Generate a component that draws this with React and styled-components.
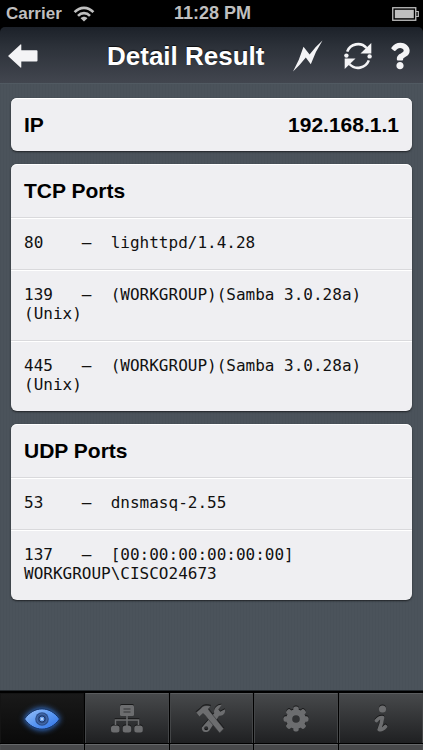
import React from 'react'
import styled, { createGlobalStyle, css } from 'styled-components'
import { FaQuestion } from 'react-icons/fa'

const GlobalStyle = createGlobalStyle`
  * { box-sizing: border-box; }
  body {
    margin: 0;
    background: #4a525a;
    font-family: "Liberation Sans", Arial, sans-serif;
  }
`

const Page = styled.div`
  min-height: 100vh;
  display: flex;
  flex-direction: column;
  background: #000;
`

const StatusBar = styled.div`
  display: grid;
  grid-template-columns: 1fr auto 1fr;
  align-items: center;
  height: 27px;
  padding: 0 4px 0 6px;
  color: #bfbfbf;
  font-size: 18px;
  font-weight: bold;
`

const Carrier = styled.div`
  display: flex;
  align-items: center;
  gap: 11px;
  font-size: 17px;
`

const Battery = styled.svg`
  justify-self: end;
`

const NavBar = styled.header`
  display: flex;
  align-items: center;
  height: 57px;
  padding: 2px 13px 0 8px;
  border-bottom: 1px solid #515a62;
  border-radius: 5px 5px 0 0;
  background: linear-gradient(#1c2129, #2c3139 35%, #42464f);
`

const NavTitle = styled.h1`
  flex: 1;
  margin: 0;
  padding-left: 69px;
  color: #fff;
  font-size: 26px;
  line-height: 30px;
  white-space: nowrap;
  text-shadow: 0 -1px 1px rgba(0, 0, 0, 0.7);
`

const NavButton = styled.button`
  display: flex;
  padding: 0;
  border: 0;
  background: none;
  color: #f4f4f6;
  cursor: pointer;
`

const NavActions = styled.div`
  display: flex;
  align-items: center;
  gap: 18px;
`

const HelpIcon = styled(FaQuestion)`
  width: 20px;
  height: 28px;
`

const Content = styled.main`
  flex: 1;
  display: flex;
  flex-direction: column;
  gap: 13px;
  padding: 14px 11px;
  background: repeating-linear-gradient(90deg, #495159 0 1px, #4b535b 1px 3px);
`

const Card = styled.section`
  border-radius: 6px;
  background: #efeff2;
  box-shadow: 0 1px 2px rgba(0, 0, 0, 0.6), inset 0 1px 0 #fff;
  overflow: hidden;
`

const CardHeader = styled.div`
  display: flex;
  align-items: center;
  justify-content: space-between;
  height: 53px;
  padding: 0 13px;
  color: #000;
  font-size: 21px;
  font-weight: bold;
`

const CardTitle = styled.h2`
  margin: 0;
  font-size: 21px;
`

const PortList = styled.ul`
  margin: 0;
  padding: 0;
  list-style: none;
`

const Port = styled.li`
  padding: 15px 13px 17px;
  border-top: 1px solid #d9d9dc;
  box-shadow: inset 0 1px 0 #fff;
  color: #111;
  font-family: "DejaVu Sans Mono", monospace;
  font-size: 16px;
  line-height: 19px;
  white-space: pre-wrap;
`

const TabBar = styled.nav`
  display: grid;
  grid-template-columns: repeat(5, 1fr);
  gap: 1px;
  padding-top: 2px;
  border-top: 1px solid #23282c;
  background: #000;
`

const raised = css`
  border: 1px solid #55585b;
  border-width: 1px 1px 0 1px;
`

const Tab = styled.button`
  display: flex;
  align-items: center;
  justify-content: center;
  height: 50px;
  padding: 0;
  ${raised}
  border-color: ${props => props.$active ? '#141414' : '#5a5c5e #434547'};
  background: ${props => props.$active
    ? 'linear-gradient(#191919, #0a0a0a)'
    : 'linear-gradient(#47494b, #1f2022)'};
  color: #6c6d6f;
  cursor: pointer;
`

const TabEdge = styled.div`
  height: 6px;
  ${raised}
  border-color: #66686a #4c4e50;
  background: #48494b;
`

const TabIcon = styled.svg`
  overflow: visible;
  filter: ${props => props.$glow
    ? 'drop-shadow(0 0 3px #3f8cff)'
    : 'drop-shadow(0 -1px 0 rgba(0, 0, 0, 0.6))'};
`

const WifiIcon = () => (
  <svg width="22" height="16" viewBox="0 0 22 16" fill="none" stroke="#bfbfbf" strokeWidth="2.6">
    <path d="M1.6 6.2C7 .4 15 .4 20.4 6.2" />
    <path d="M5 9.8C8.4 6.2 13.6 6.2 17 9.8" />
    <path d="M11 15.5L7.6 12.3C9.5 10.3 12.5 10.3 14.4 12.3Z" fill="#bfbfbf" stroke="none" />
  </svg>
)

const BatteryIcon = () => (
  <Battery width="27" height="14" viewBox="0 0 27 14">
    <rect x=".75" y=".75" width="23" height="12.5" fill="none" stroke="#bfbfbf" strokeWidth="1.3" />
    <rect x="2.8" y="2.8" width="19" height="8.4" fill="#bfbfbf" />
    <path d="M24 4.5h2.3v5H24" fill="none" stroke="#bfbfbf" strokeWidth="1.2" />
  </Battery>
)

const BackIcon = () => (
  <svg width="30" height="24" viewBox="0 0 30 24" fill="currentColor">
    <path d="M0 12L12.5.5Q13.3 0 13.3 1V6.200H28.500Q29.500 6.200 29.500 7.200V16.600Q29.500 17.600 28.500 17.600H13.300V23Q13.300 24 12.500 23.500Z" />
  </svg>
)

const BoltIcon = () => (
  <svg width="33" height="32" viewBox="0 0 33 32" fill="currentColor">
    <path d="M29.5.5Q22 12 17.800 24.300L12.800 17.500Q7 25 0 31.500Q6.500 20 10.500 6.800L16.600 14.500Q22 7 29.500.5Z" />
  </svg>
)

const RefreshIcon = () => (
  <svg width="28" height="28" viewBox="0 0 28 28" fill="currentColor">
    <path d="M3.2 9.600A11.600 11.600 0 0 1 22.600 6M24.800 18.400A11.600 11.600 0 0 1 5.400 22" fill="none" stroke="currentColor" strokeWidth="2.6" />
    <path d="M27.300 1V11.500H16.500Z" />
    <path d="M.7 27V16.500H11.500Z" />
    <circle cx="2.400" cy="13.600" r="2.200" />
    <circle cx="25.600" cy="14.400" r="2.200" />
  </svg>
)

const EyeIcon = () => (
  <TabIcon $glow width="38" height="24" viewBox="0 0 38 24">
    <defs>
      <linearGradient id="eye" x1="0" y1="0" x2="1" y2="1">
        <stop offset="0" stopColor="#9cc2f8" />
        <stop offset=".5" stopColor="#5b98f2" />
        <stop offset="1" stopColor="#2c6fe4" />
      </linearGradient>
    </defs>
    <path d="M1.500 12C11-1.500 27-1.500 36.500 12C27 25.500 11 25.500 1.500 12Z" fill="url(#eye)" stroke="#14305f" strokeWidth="1" />
    <circle cx="19" cy="12" r="6.800" fill="#2d4f8c" />
    <circle cx="19" cy="12" r="5" fill="none" stroke="#496fae" strokeWidth="1" />
    <circle cx="19" cy="12" r="3" fill="#6fa3ee" stroke="#1d3768" strokeWidth="1" />
    <circle cx="19" cy="12" r="1" fill="#cfe3ff" />
  </TabIcon>
)

const NetworkIcon = () => (
  <TabIcon width="32" height="28" viewBox="0 0 32 28" fill="currentColor">
    <rect x="9" y="0" width="14" height="11" rx="1.5" />
    <path d="M12.500 4h7M12.500 7h7" stroke="#333537" strokeWidth="1.2" />
    <path d="M16 11v10M4.500 20v-5h23v5" fill="none" stroke="currentColor" strokeWidth="1.6" />
    <rect x="0" y="20.5" width="8.500" height="7" rx="2.5" />
    <rect x="11.7" y="20.5" width="8.500" height="7" rx="2.5" />
    <rect x="23.3" y="20.5" width="8.500" height="7" rx="2.5" />
  </TabIcon>
)

const ToolsIcon = () => (
  <TabIcon width="30" height="30" viewBox="0 0 30 30" fill="currentColor">
    <path d="M25.800.8L22.400 5.200 24.200 7.800 28.800 5.300C30 9.200 27 12.300 23 11.700L14 25.500C11.500 30 4.800 28.200 6 23.200L18.200 9.200C17.200 5 21 .2 25.800.8ZM10.200 22.300A2 2 0 1 0 10.200 26.300A2 2 0 1 0 10.200 22.300Z" fillRule="evenodd" />
    <path d="M0 8.500L4.500 4.800C6.500 1.700 10 .6 15 2.300L12.200 5 13.600 7 27.800 24.800 23.600 29 8.600 10.800 7 9.500 3.400 12.800Z" stroke="#303234" strokeWidth=".6" />
  </TabIcon>
)

const GearIcon = () => (
  <TabIcon width="26" height="26" viewBox="-13 -13 26 26">
    {[0, 45, 90, 135].map(angle => (
      <rect key={angle} x="-2.7" y="-12.5" width="5.4" height="25" rx="2" fill="currentColor" transform={`rotate(${angle})`} />
    ))}
    <circle r="9.8" fill="currentColor" />
    <circle r="3.8" fill="#303133" />
  </TabIcon>
)

const InfoIcon = () => (
  <TabIcon width="14" height="28" viewBox="0 0 14 28">
    <circle cx="8.500" cy="4" r="3.600" fill="currentColor" />
    <path
      d="M2.500 15.500Q5 12 8.500 12.500Q7.800 18 5.200 24.500Q8 25.500 11.500 21.500"
      fill="none"
      stroke="currentColor"
      strokeWidth="3.600"
      strokeLinecap="round"
      strokeLinejoin="round"
    />
  </TabIcon>
)

const tabs = [
  { label: 'Scan', icon: <EyeIcon />, active: true },
  { label: 'Network', icon: <NetworkIcon /> },
  { label: 'Tools', icon: <ToolsIcon /> },
  { label: 'Settings', icon: <GearIcon /> },
  { label: 'Info', icon: <InfoIcon /> },
]

const tcpPorts = [
  { port: '80', service: 'lighttpd/1.4.28' },
  { port: '139', service: '(WORKGROUP)(Samba 3.0.28a) (Unix)' },
  { port: '445', service: '(WORKGROUP)(Samba 3.0.28a) (Unix)' },
]

const udpPorts = [
  { port: '53', service: 'dnsmasq-2.55' },
  { port: '137', service: '[00:00:00:00:00:00] WORKGROUP\\CISCO24673' },
]

const PortCard = ({ title, ports }) => (
  <Card>
    <CardHeader>
      <CardTitle>{title}</CardTitle>
    </CardHeader>
    <PortList>
      {ports.map(({ port, service }) => (
        <Port key={port}>{port.padEnd(6) + '–  ' + service}</Port>
      ))}
    </PortList>
  </Card>
)

const App = () => (
  <Page>
    <GlobalStyle />
    <StatusBar>
      <Carrier>Carrier <WifiIcon /></Carrier>
      <span>11:28 PM</span>
      <BatteryIcon />
    </StatusBar>
    <NavBar>
      <NavButton aria-label="Back"><BackIcon /></NavButton>
      <NavTitle>Detail Result</NavTitle>
      <NavActions>
        <NavButton aria-label="Run"><BoltIcon /></NavButton>
        <NavButton aria-label="Refresh"><RefreshIcon /></NavButton>
        <NavButton aria-label="Help"><HelpIcon /></NavButton>
      </NavActions>
    </NavBar>
    <Content>
      <Card>
        <CardHeader>
          <CardTitle>IP</CardTitle>
          <span>192.168.1.1</span>
        </CardHeader>
      </Card>
      <PortCard title="TCP Ports" ports={tcpPorts} />
      <PortCard title="UDP Ports" ports={udpPorts} />
    </Content>
    <TabBar>
      {tabs.map(tab => (
        <Tab key={tab.label} aria-label={tab.label} $active={tab.active}>{tab.icon}</Tab>
      ))}
      {tabs.map(tab => <TabEdge key={tab.label} />)}
    </TabBar>
  </Page>
)

export default App
